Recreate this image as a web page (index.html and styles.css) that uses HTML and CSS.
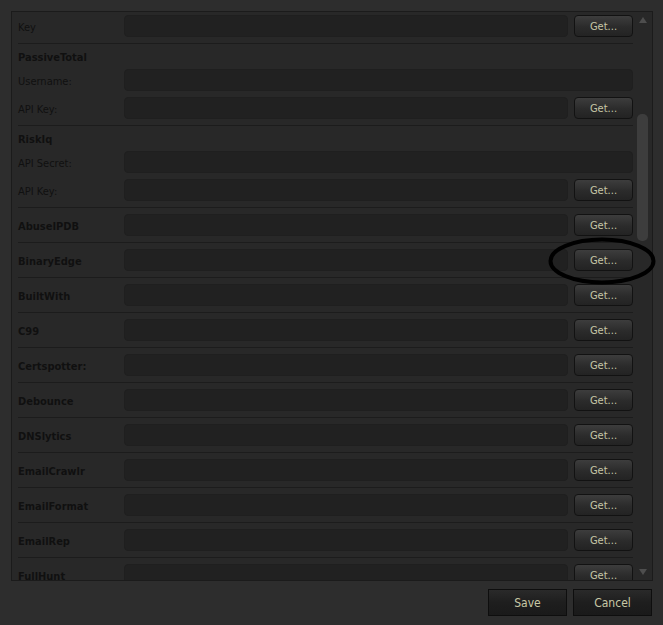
FILE: index.html
```html
<!DOCTYPE html>
<html>
<head>
<meta charset="utf-8">
<link rel="stylesheet" href="styles.css">
</head>
<body>
<div class="panel">
  <div class="viewport">
    <div class="list">
      <div class="row"><span class="label">Key</span><div class="input"></div><button class="get">Get...</button></div>
      <div class="section">
        <div class="heading">PassiveTotal</div>
        <div class="field"><span class="label">Username:</span><div class="input"></div></div>
        <div class="field"><span class="label">API Key:</span><div class="input"></div><button class="get">Get...</button></div>
      </div>
      <div class="section">
        <div class="heading">RiskIq</div>
        <div class="field"><span class="label">API Secret:</span><div class="input"></div></div>
        <div class="field"><span class="label">API Key:</span><div class="input"></div><button class="get">Get...</button></div>
      </div>
      <div class="row"><span class="label bold">AbuseIPDB</span><div class="input"></div><button class="get">Get...</button></div>
      <div class="row"><span class="label bold">BinaryEdge</span><div class="input"></div><button class="get">Get...</button></div>
      <div class="row"><span class="label bold">BuiltWith</span><div class="input"></div><button class="get">Get...</button></div>
      <div class="row"><span class="label bold">C99</span><div class="input"></div><button class="get">Get...</button></div>
      <div class="row"><span class="label bold">Certspotter:</span><div class="input"></div><button class="get">Get...</button></div>
      <div class="row"><span class="label bold">Debounce</span><div class="input"></div><button class="get">Get...</button></div>
      <div class="row"><span class="label bold">DNSlytics</span><div class="input"></div><button class="get">Get...</button></div>
      <div class="row"><span class="label bold">EmailCrawlr</span><div class="input"></div><button class="get">Get...</button></div>
      <div class="row"><span class="label bold">EmailFormat</span><div class="input"></div><button class="get">Get...</button></div>
      <div class="row"><span class="label bold">EmailRep</span><div class="input"></div><button class="get">Get...</button></div>
      <div class="row"><span class="label bold">FullHunt</span><div class="input"></div><button class="get">Get...</button></div>
    </div>
  </div>
  <div class="scrollbar">
    <span class="arrow up"></span>
    <div class="track"><div class="thumb"></div></div>
    <span class="arrow down"></span>
  </div>
</div>
<div class="actions">
  <button class="action">Save</button>
  <button class="action">Cancel</button>
</div>
<svg class="mark" width="112" height="52" viewBox="0 0 112 52"><ellipse cx="55" cy="25" rx="51.5" ry="21.5" fill="none" stroke="#000" stroke-width="4"/></svg>
</body>
</html>
```
FILE: styles.css
```css
html, body {
  margin: 0;
  padding: 0;
}
body {
  background: #2d2d2d;
  width: 663px;
  height: 625px;
  overflow: hidden;
  position: relative;
  font-family: "DejaVu Sans Condensed", "DejaVu Sans", sans-serif;
}
.panel {
  margin: 11px 0 0 11px;
  width: 640px;
  height: 568px;
  border: 1px solid #1b1b1b;
  background: #282828;
  display: flex;
}
.viewport {
  flex: 1;
  overflow: hidden;
  padding: 0 0 0 6px;
}
.list {
  margin-top: -3px;
  width: 615px;
}
.row {
  height: 34px;
  border-bottom: 1px solid #1c1c1c;
  display: flex;
  align-items: center;
}
.section {
  border-bottom: 1px solid #1c1c1c;
  padding-bottom: 6px;
  display: flex;
  flex-direction: column;
  gap: 6px;
}
.heading {
  height: 18px;
  padding-top: 7px;
  font-weight: bold;
  font-size: 11px;
  line-height: 13px;
  color: #101010;
  margin-bottom: -6px;
}
.field {
  height: 22px;
  display: flex;
  align-items: center;
}
.label {
  width: 106px;
  padding-top: 2px;
  font-size: 11px;
  color: #101010;
  flex: none;
}
.label.bold {
  font-weight: bold;
}
.input {
  flex: 1;
  height: 20px;
  border: 1px solid #1f1f1f;
  border-radius: 4px;
  background: #212121;
}
.get {
  margin-left: 6px;
  width: 59px;
  height: 22px;
  flex: none;
  border: 1px solid #121212;
  border-radius: 4px;
  background: linear-gradient(#3d3d3d, #2b2b2b 55%, #232323);
  color: #c6c6a6;
  font-family: "DejaVu Sans Condensed", "DejaVu Sans", sans-serif;
  font-size: 11px;
  padding: 1px 0 0;
}
.scrollbar {
  width: 19px;
  flex: none;
  display: flex;
  flex-direction: column;
  align-items: center;
}
.arrow {
  width: 0;
  height: 0;
  border-left: 4.5px solid transparent;
  border-right: 4.5px solid transparent;
  flex: none;
}
.arrow.up {
  margin-top: 5px;
  border-bottom: 6px solid #4e4e4e;
}
.arrow.down {
  margin-bottom: 5px;
  border-top: 6px solid #4e4e4e;
}
.track {
  flex: 1;
  width: 11px;
  padding-top: 91px;
}
.thumb {
  width: 11px;
  height: 127px;
  border-radius: 5px;
  background: #3d3d3d;
}
.actions {
  display: flex;
  justify-content: flex-end;
  gap: 6px;
  margin: 8px 11px 0 0;
}
.action {
  width: 79px;
  height: 27px;
  border: 1px solid #0e0e0e;
  background: linear-gradient(#2a2a2a, #1e1e1e 50%, #1a1a1a);
  color: #c8c8a6;
  font-family: "DejaVu Sans Condensed", "DejaVu Sans", sans-serif;
  font-size: 12px;
  padding: 0;
}
.mark {
  position: absolute;
  left: 547px;
  top: 236px;
}
```
